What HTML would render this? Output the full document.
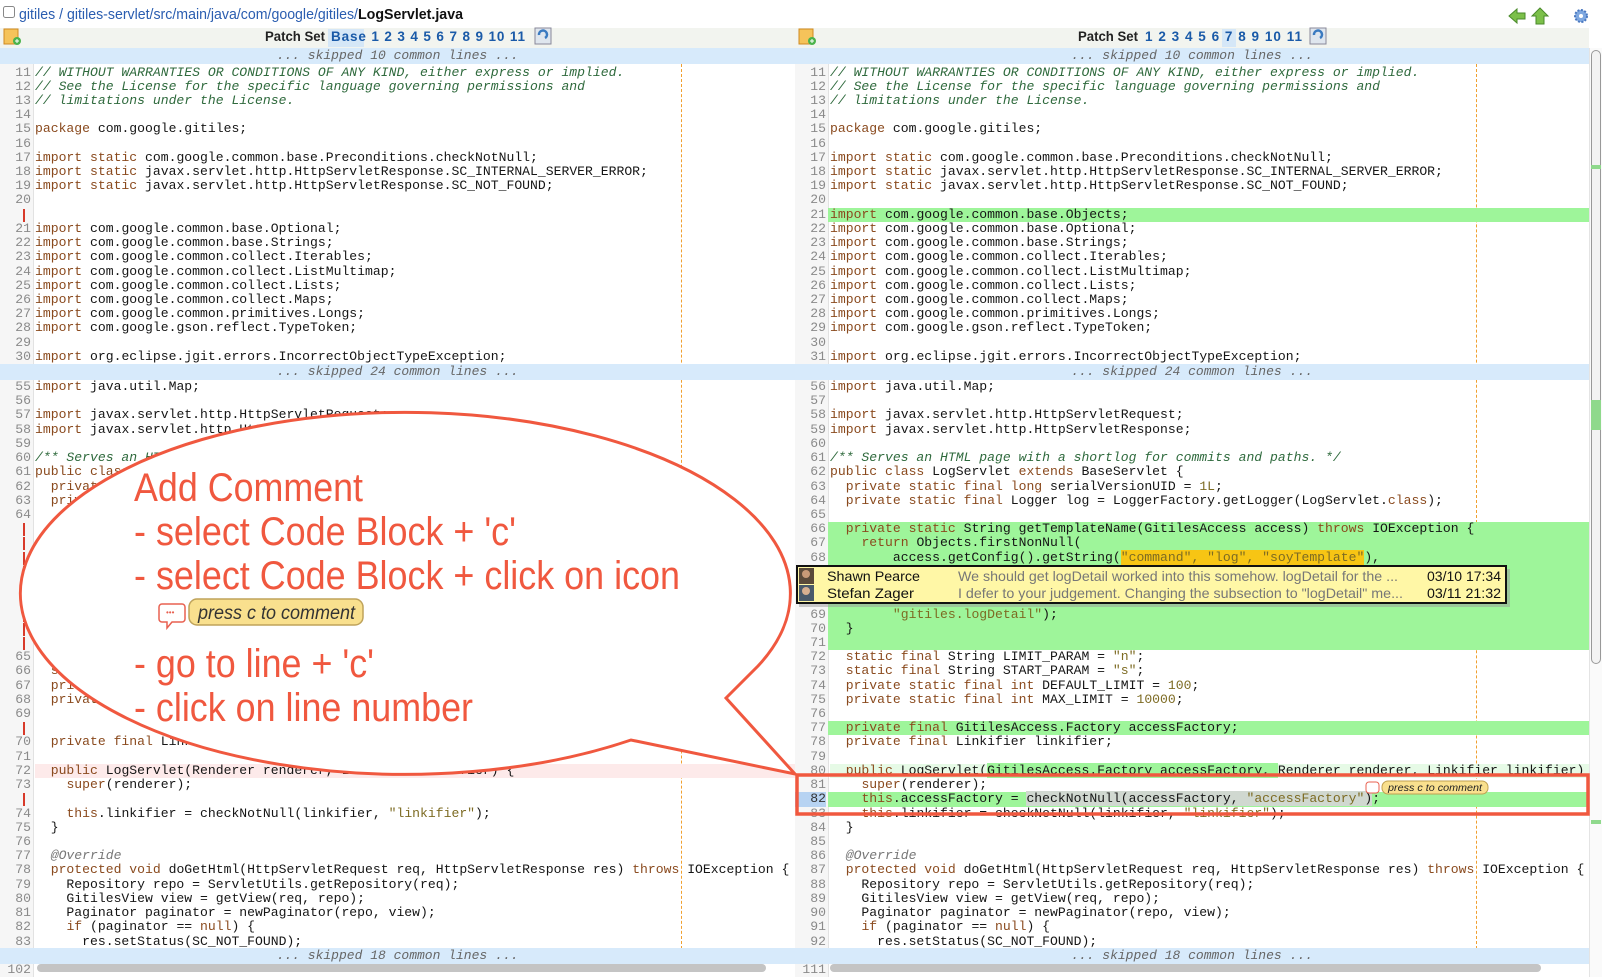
<!DOCTYPE html>
<html><head><meta charset="utf-8">
<style>
body{margin:0;width:1602px;height:977px;overflow:hidden;background:#fff;position:relative;font-family:"Liberation Sans",sans-serif}
.pane{position:absolute;top:0;height:977px;overflow:hidden}
.gut{position:absolute;top:64px;left:0;width:33px;height:913px;background:#f6f6f6;border-right:1px solid #e2e2e2}
.dash{position:absolute;left:681px;top:64px;height:900px;border-left:1px dashed #f0a030}
.seg{position:absolute;left:0;right:0}
.r{height:14.23px;position:relative;font:13.1px/14.23px "Liberation Mono",monospace;white-space:pre;color:#151515}
.r i{position:absolute;left:0;width:31px;text-align:right;color:#8a8a8a;font-style:normal}
.r u{position:absolute;left:35px;right:0;top:0;bottom:0;text-decoration:none}
.g u{background:#9ef59a;left:33px;padding-left:2px}
.pk u{background:#fdeaea}
.x::before{content:"";position:absolute;left:23px;top:1px;width:2px;height:13px;background:#d83a2a}
b{font-weight:normal;color:#8a4a1e}
em{color:#2f6a3d}
var{font-style:normal;color:#7d6b23}
.an{color:#777;font-style:italic}
.sk{position:absolute;left:0;right:0;height:15.5px;background:#d7eafb;font:italic 13px/15.5px "Liberation Mono",monospace;color:#666;text-align:center}
.hs{position:absolute;top:964px;height:8px;border-radius:4px;background:#c4c4c4}
</style></head><body>

<div style="position:absolute;left:0;top:28px;width:1589px;height:20px;background:#f2f4ef"></div>

<!-- LEFT PANE -->
<div class="pane" style="left:0;width:795px">
<div class="gut"></div>
<div class="dash"></div>
<div class="sk" style="top:48px">... skipped 10 common lines ...</div>
<div class="seg" style="top:65.5px">
<div class="r"><i>11</i><u><em>// WITHOUT WARRANTIES OR CONDITIONS OF ANY KIND, either express or implied.</em></u></div>
<div class="r"><i>12</i><u><em>// See the License for the specific language governing permissions and</em></u></div>
<div class="r"><i>13</i><u><em>// limitations under the License.</em></u></div>
<div class="r"><i>14</i><u></u></div>
<div class="r"><i>15</i><u><b>package</b> com.google.gitiles;</u></div>
<div class="r"><i>16</i><u></u></div>
<div class="r"><i>17</i><u><b>import static</b> com.google.common.base.Preconditions.checkNotNull;</u></div>
<div class="r"><i>18</i><u><b>import static</b> javax.servlet.http.HttpServletResponse.SC_INTERNAL_SERVER_ERROR;</u></div>
<div class="r"><i>19</i><u><b>import static</b> javax.servlet.http.HttpServletResponse.SC_NOT_FOUND;</u></div>
<div class="r"><i>20</i><u></u></div>
<div class="r x"></div>
<div class="r"><i>21</i><u><b>import</b> com.google.common.base.Optional;</u></div>
<div class="r"><i>22</i><u><b>import</b> com.google.common.base.Strings;</u></div>
<div class="r"><i>23</i><u><b>import</b> com.google.common.collect.Iterables;</u></div>
<div class="r"><i>24</i><u><b>import</b> com.google.common.collect.ListMultimap;</u></div>
<div class="r"><i>25</i><u><b>import</b> com.google.common.collect.Lists;</u></div>
<div class="r"><i>26</i><u><b>import</b> com.google.common.collect.Maps;</u></div>
<div class="r"><i>27</i><u><b>import</b> com.google.common.primitives.Longs;</u></div>
<div class="r"><i>28</i><u><b>import</b> com.google.gson.reflect.TypeToken;</u></div>
<div class="r"><i>29</i><u></u></div>
<div class="r"><i>30</i><u><b>import</b> org.eclipse.jgit.errors.IncorrectObjectTypeException;</u></div>
</div>
<div class="sk" style="top:364px">... skipped 24 common lines ...</div>
<div class="seg" style="top:380px">
<div class="r"><i>55</i><u><b>import</b> java.util.Map;</u></div>
<div class="r"><i>56</i><u></u></div>
<div class="r"><i>57</i><u><b>import</b> javax.servlet.http.HttpServletRequest;</u></div>
<div class="r"><i>58</i><u><b>import</b> javax.servlet.http.HttpServletResponse;</u></div>
<div class="r"><i>59</i><u></u></div>
<div class="r"><i>60</i><u><em>/** Serves an HTML page with a shortlog for commits and paths. */</em></u></div>
<div class="r"><i>61</i><u><b>public class</b> LogServlet <b>extends</b> BaseServlet {</u></div>
<div class="r"><i>62</i><u>  <b>private static final long</b> serialVersionUID = <var>1L</var>;</u></div>
<div class="r"><i>63</i><u>  <b>private static final</b> Logger log = LoggerFactory.getLogger(LogServlet.<b>class</b>);</u></div>
<div class="r"><i>64</i><u></u></div>
<div class="r x"></div><div class="r x"></div><div class="r x"></div><div class="r x"></div><div class="r x"></div><div class="r x"></div><div class="r x"></div><div class="r x"></div><div class="r x"></div>
<div class="r"><i>65</i><u>  <b>static final</b> String LIMIT_PARAM = <var>"n"</var>;</u></div>
<div class="r"><i>66</i><u>  <b>static final</b> String START_PARAM = <var>"s"</var>;</u></div>
<div class="r"><i>67</i><u>  <b>private static final int</b> DEFAULT_LIMIT = <var>100</var>;</u></div>
<div class="r"><i>68</i><u>  <b>private static final int</b> MAX_LIMIT = <var>10000</var>;</u></div>
<div class="r"><i>69</i><u></u></div>
<div class="r x"></div>
<div class="r"><i>70</i><u>  <b>private final</b> Linkifier linkifier;</u></div>
<div class="r"><i>71</i><u></u></div>
<div class="r pk"><i>72</i><u>  <b>public</b> LogServlet(Renderer renderer, Linkifier linkifier) {</u></div>
<div class="r"><i>73</i><u>    <b>super</b>(renderer);</u></div>
<div class="r x"></div>
<div class="r"><i>74</i><u>    <b>this</b>.linkifier = checkNotNull(linkifier, <var>"linkifier"</var>);</u></div>
<div class="r"><i>75</i><u>  }</u></div>
<div class="r"><i>76</i><u></u></div>
<div class="r"><i>77</i><u>  <span class="an">@Override</span></u></div>
<div class="r"><i>78</i><u>  <b>protected void</b> doGetHtml(HttpServletRequest req, HttpServletResponse res) <b>throws</b> IOException {</u></div>
<div class="r"><i>79</i><u>    Repository repo = ServletUtils.getRepository(req);</u></div>
<div class="r"><i>80</i><u>    GitilesView view = getView(req, repo);</u></div>
<div class="r"><i>81</i><u>    Paginator paginator = newPaginator(repo, view);</u></div>
<div class="r"><i>82</i><u>    <b>if</b> (paginator == <b>null</b>) {</u></div>
<div class="r"><i>83</i><u>      res.setStatus(SC_NOT_FOUND);</u></div>
</div>
<div class="sk" style="top:948px">... skipped 18 common lines ...</div>
<div class="seg" style="top:963px"><div class="r"><i>102</i><u></u></div></div>
<div class="hs" style="left:37px;width:729px"></div>
</div>

<!-- RIGHT PANE -->
<div class="pane" style="left:795px;width:794px">
<div class="gut"></div>
<div class="dash"></div>
<div class="sk" style="top:48px">... skipped 10 common lines ...</div>
<div class="seg" style="top:65.5px">
<div class="r"><i>11</i><u><em>// WITHOUT WARRANTIES OR CONDITIONS OF ANY KIND, either express or implied.</em></u></div>
<div class="r"><i>12</i><u><em>// See the License for the specific language governing permissions and</em></u></div>
<div class="r"><i>13</i><u><em>// limitations under the License.</em></u></div>
<div class="r"><i>14</i><u></u></div>
<div class="r"><i>15</i><u><b>package</b> com.google.gitiles;</u></div>
<div class="r"><i>16</i><u></u></div>
<div class="r"><i>17</i><u><b>import static</b> com.google.common.base.Preconditions.checkNotNull;</u></div>
<div class="r"><i>18</i><u><b>import static</b> javax.servlet.http.HttpServletResponse.SC_INTERNAL_SERVER_ERROR;</u></div>
<div class="r"><i>19</i><u><b>import static</b> javax.servlet.http.HttpServletResponse.SC_NOT_FOUND;</u></div>
<div class="r"><i>20</i><u></u></div>
<div class="r g"><i>21</i><u><b>import</b> com.google.common.base.Objects;</u></div>
<div class="r"><i>22</i><u><b>import</b> com.google.common.base.Optional;</u></div>
<div class="r"><i>23</i><u><b>import</b> com.google.common.base.Strings;</u></div>
<div class="r"><i>24</i><u><b>import</b> com.google.common.collect.Iterables;</u></div>
<div class="r"><i>25</i><u><b>import</b> com.google.common.collect.ListMultimap;</u></div>
<div class="r"><i>26</i><u><b>import</b> com.google.common.collect.Lists;</u></div>
<div class="r"><i>27</i><u><b>import</b> com.google.common.collect.Maps;</u></div>
<div class="r"><i>28</i><u><b>import</b> com.google.common.primitives.Longs;</u></div>
<div class="r"><i>29</i><u><b>import</b> com.google.gson.reflect.TypeToken;</u></div>
<div class="r"><i>30</i><u></u></div>
<div class="r"><i>31</i><u><b>import</b> org.eclipse.jgit.errors.IncorrectObjectTypeException;</u></div>
</div>
<div class="sk" style="top:364px">... skipped 24 common lines ...</div>
<div class="seg" style="top:380px">
<div class="r"><i>56</i><u><b>import</b> java.util.Map;</u></div>
<div class="r"><i>57</i><u></u></div>
<div class="r"><i>58</i><u><b>import</b> javax.servlet.http.HttpServletRequest;</u></div>
<div class="r"><i>59</i><u><b>import</b> javax.servlet.http.HttpServletResponse;</u></div>
<div class="r"><i>60</i><u></u></div>
<div class="r"><i>61</i><u><em>/** Serves an HTML page with a shortlog for commits and paths. */</em></u></div>
<div class="r"><i>62</i><u><b>public class</b> LogServlet <b>extends</b> BaseServlet {</u></div>
<div class="r"><i>63</i><u>  <b>private static final long</b> serialVersionUID = <var>1L</var>;</u></div>
<div class="r"><i>64</i><u>  <b>private static final</b> Logger log = LoggerFactory.getLogger(LogServlet.<b>class</b>);</u></div>
<div class="r"><i>65</i><u></u></div>
<div class="r g"><i>66</i><u>  <b>private static</b> String getTemplateName(GitilesAccess access) <b>throws</b> IOException {</u></div>
<div class="r g"><i>67</i><u>    <b>return</b> Objects.firstNonNull(</u></div>
<div class="r g"><i>68</i><u>        access.getConfig().getString(<var style="background:#f7c514">"command", "log", "soyTemplate"</var>),</u></div>
<div class="r g"><u></u></div><div class="r g"><u></u></div><div class="r g"><u></u></div>
<div class="r g"><i>69</i><u>        <var>"gitiles.logDetail"</var>);</u></div>
<div class="r g"><i>70</i><u>  }</u></div>
<div class="r g"><i>71</i><u></u></div>
<div class="r"><i>72</i><u>  <b>static final</b> String LIMIT_PARAM = <var>"n"</var>;</u></div>
<div class="r"><i>73</i><u>  <b>static final</b> String START_PARAM = <var>"s"</var>;</u></div>
<div class="r"><i>74</i><u>  <b>private static final int</b> DEFAULT_LIMIT = <var>100</var>;</u></div>
<div class="r"><i>75</i><u>  <b>private static final int</b> MAX_LIMIT = <var>10000</var>;</u></div>
<div class="r"><i>76</i><u></u></div>
<div class="r g"><i>77</i><u>  <b>private final</b> GitilesAccess.Factory accessFactory;</u></div>
<div class="r"><i>78</i><u>  <b>private final</b> Linkifier linkifier;</u></div>
<div class="r"><i>79</i><u></u></div>
<div class="r"><i>80</i><u style="background:#e6fae6">  <b>public</b> LogServlet(<span style="background:#9ef59a">GitilesAccess.Factory accessFactory, </span>Renderer renderer, Linkifier linkifier) {</u></div>
<div class="r"><i>81</i><u>    <b>super</b>(renderer);</u></div>
<div class="r g"><i style="background:#b7d3f2;color:#333">82</i><u>    <b>this</b>.accessFactory = <span style="background:#d0d8d0">checkNotNull(accessFactory, <var>"accessFactory"</var>)</span>;</u></div>
<div class="r"><i>83</i><u>    <b>this</b>.linkifier = checkNotNull(linkifier, <var>"linkifier"</var>);</u></div>
<div class="r"><i>84</i><u>  }</u></div>
<div class="r"><i>85</i><u></u></div>
<div class="r"><i>86</i><u>  <span class="an">@Override</span></u></div>
<div class="r"><i>87</i><u>  <b>protected void</b> doGetHtml(HttpServletRequest req, HttpServletResponse res) <b>throws</b> IOException {</u></div>
<div class="r"><i>88</i><u>    Repository repo = ServletUtils.getRepository(req);</u></div>
<div class="r"><i>89</i><u>    GitilesView view = getView(req, repo);</u></div>
<div class="r"><i>90</i><u>    Paginator paginator = newPaginator(repo, view);</u></div>
<div class="r"><i>91</i><u>    <b>if</b> (paginator == <b>null</b>) {</u></div>
<div class="r"><i>92</i><u>      res.setStatus(SC_NOT_FOUND);</u></div>
</div>
<div class="sk" style="top:948px">... skipped 18 common lines ...</div>
<div class="seg" style="top:963px"><div class="r"><i>111</i><u></u></div></div>
<div class="hs" style="left:35px;width:711px"></div>
</div>

<!-- vertical scrollbar -->
<div style="position:absolute;left:1589px;top:48px;width:13px;height:929px;background:#fafafa;border-left:1px solid #e4e4e4"></div>
<div style="position:absolute;left:1591px;top:50px;width:8px;height:612px;border:1px solid #999;border-radius:5px;background:#f3f3f3"></div>
<div style="position:absolute;left:1591px;top:165px;width:10px;height:4px;background:#8fd98c"></div>
<div style="position:absolute;left:1591px;top:400px;width:10px;height:30px;background:#8fd98c"></div>
<div style="position:absolute;left:1591px;top:820px;width:10px;height:4px;background:#8fd98c"></div>

<svg width="1602" height="977" style="position:absolute;left:0;top:0" font-family="Liberation Sans, sans-serif">
<rect x="3.5" y="6.5" width="11" height="11" rx="2" fill="#fff" stroke="#888"/>
<text x="19" y="19" font-size="15" fill="#2a5db0" textLength="339" lengthAdjust="spacingAndGlyphs">gitiles / gitiles-servlet/src/main/java/com/google/gitiles/</text>
<text x="358" y="19" font-size="15" font-weight="bold" fill="#111" textLength="105" lengthAdjust="spacingAndGlyphs">LogServlet.java</text>
<path d="M1509,16 L1517,9 L1517,13 L1525,13 L1525,19 L1517,19 L1517,23 Z" fill="#7cc04a" stroke="#4a8a2a"/>
<path d="M1540,8 L1548,16 L1544,16 L1544,24 L1536,24 L1536,16 L1532,16 Z" fill="#7cc04a" stroke="#4a8a2a"/>
<circle cx="1581" cy="16" r="6" fill="#7fa8e0" stroke="#4a78c0" stroke-width="2" stroke-dasharray="2 1.5"/>
<circle cx="1581" cy="16" r="2" fill="#fff"/>
<g><rect x="4" y="29" width="14" height="15" fill="#f5c35a" stroke="#d08a20"/><circle cx="17" cy="41" r="4" fill="#4bb34b"/><path d="M15,41h4M17,39v4" stroke="#fff"/></g>
<g><rect x="799" y="29" width="14" height="15" fill="#f5c35a" stroke="#d08a20"/><circle cx="812" cy="41" r="4" fill="#4bb34b"/><path d="M810,41h4M812,39v4" stroke="#fff"/></g>
<text x="265" y="41" font-size="13.5" font-weight="bold" fill="#222" textLength="60" lengthAdjust="spacingAndGlyphs">Patch Set</text>
<rect x="328" y="29" width="36" height="18" fill="#d5e7f7"/>
<text x="331" y="41" font-size="13.5" font-weight="bold" fill="#1a5aa8" textLength="194" lengthAdjust="spacing">Base 1 2 3 4 5 6 7 8 9 10 11</text>
<rect x="535" y="28" width="16" height="16" fill="#dfe6ee" stroke="#889"/><path d="M539,35 a4,4 0 1 1 6,3" stroke="#3a7ac0" stroke-width="2.5" fill="none"/>
<text x="1078" y="41" font-size="13.5" font-weight="bold" fill="#222" textLength="60" lengthAdjust="spacingAndGlyphs">Patch Set</text>
<rect x="1222" y="29" width="14" height="18" fill="#d5e7f7"/>
<text x="1145" y="41" font-size="13.5" font-weight="bold" fill="#1a5aa8" textLength="157" lengthAdjust="spacing">1 2 3 4 5 6 7 8 9 10 11</text>
<rect x="1310" y="28" width="16" height="16" fill="#dfe6ee" stroke="#889"/><path d="M1314,35 a4,4 0 1 1 6,3" stroke="#3a7ac0" stroke-width="2.5" fill="none"/>

<rect x="799" y="569" width="711" height="38" fill="#999" opacity="0.5"/>
<rect x="797" y="566" width="709" height="37" fill="#fff7a6" stroke="#111" stroke-width="2"/>
<rect x="799" y="568" width="15" height="16" fill="#5a4a3a"/><circle cx="806" cy="574" r="4" fill="#c89a78"/>
<rect x="799" y="585" width="15" height="16" fill="#4a5a6a"/><circle cx="806" cy="591" r="4" fill="#d8b090"/>
<text x="827" y="581" font-size="14" fill="#111" textLength="93" lengthAdjust="spacingAndGlyphs">Shawn Pearce</text>
<text x="827" y="598" font-size="14" fill="#111" textLength="87" lengthAdjust="spacingAndGlyphs">Stefan Zager</text>
<text x="958" y="581" font-size="14" fill="#777" textLength="440" lengthAdjust="spacingAndGlyphs">We should get logDetail worked into this somehow. logDetail for the ...</text>
<text x="958" y="598" font-size="14" fill="#777" textLength="445" lengthAdjust="spacingAndGlyphs">I defer to your judgement. Changing the subsection to "logDetail" me...</text>
<text x="1427" y="581" font-size="14" fill="#111" textLength="74" lengthAdjust="spacingAndGlyphs">03/10 17:34</text>
<text x="1427" y="598" font-size="14" fill="#111" textLength="74" lengthAdjust="spacingAndGlyphs">03/11 21:32</text>

<rect x="1366" y="782" width="13" height="11" rx="3" fill="#fff" stroke="#e86050"/>
<rect x="1382" y="781" width="106" height="13" rx="6" fill="#f9e08e" stroke="#c0a050"/>
<text x="1388" y="791" font-size="10" font-style="italic" fill="#222" textLength="94" lengthAdjust="spacingAndGlyphs">press c to comment</text>

<rect x="797" y="775" width="791" height="39" fill="none" stroke="#f0583f" stroke-width="3.5"/>

<path d="M631,740 A385,181 0 1,1 758,666 L726,698 L795,774 Z" fill="#fff" stroke="#f0583f" stroke-width="3" stroke-linejoin="miter"/>
<g fill="#f0583f" font-size="40">
<text x="134" y="501" textLength="229" lengthAdjust="spacingAndGlyphs">Add Comment</text>
<text x="134" y="545" textLength="382" lengthAdjust="spacingAndGlyphs">- select Code Block + 'c'</text>
<text x="134" y="589" textLength="546" lengthAdjust="spacingAndGlyphs">- select Code Block + click on icon</text>
<text x="134" y="677" textLength="240" lengthAdjust="spacingAndGlyphs">- go to line + 'c'</text>
<text x="134" y="721" textLength="339" lengthAdjust="spacingAndGlyphs">- click on line number</text>
</g>
<path d="M162,604 h20 a3,3 0 0 1 3,3 v12 a3,3 0 0 1 -3,3 h-10 l-5,6 v-6 h-5 a3,3 0 0 1 -3,-3 v-12 a3,3 0 0 1 3,-3 z" fill="#fff" stroke="#e86050" stroke-width="1.5"/>
<text x="166" y="615" font-size="8" fill="#e86050">•••</text>
<rect x="189" y="599" width="174" height="26" rx="8" fill="#f9e08e" stroke="#bfa35a" stroke-width="1.5"/>
<text x="198" y="619" font-size="19" font-style="italic" fill="#333" textLength="157" lengthAdjust="spacingAndGlyphs">press c to comment</text>
</svg>
</body></html>
